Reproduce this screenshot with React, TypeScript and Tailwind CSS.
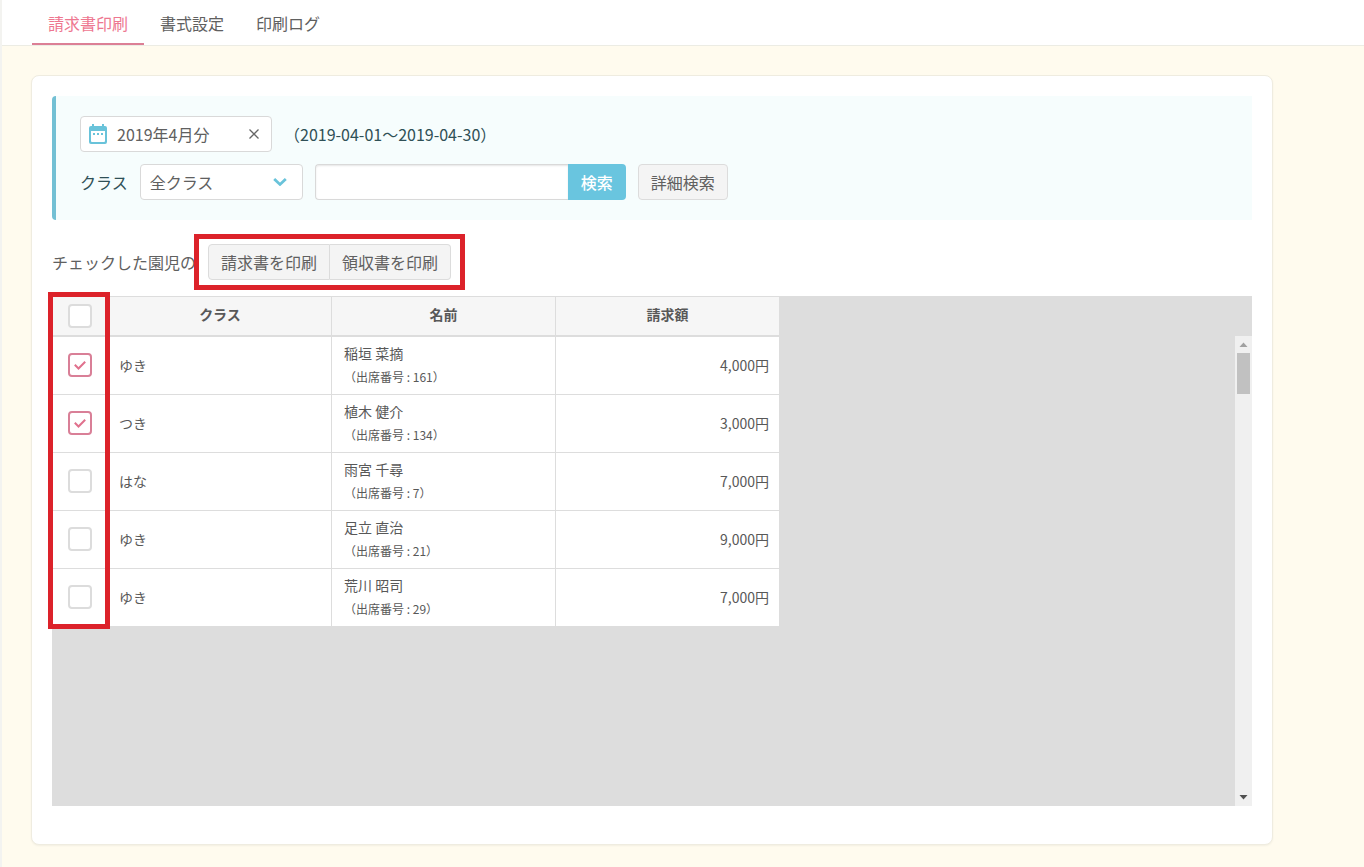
import { useState } from 'react';

interface Child {
    readonly id: number;
    readonly className: string;
    readonly name: string;
    readonly number: number;
    readonly amount: number;
}

const TABS = ['請求書印刷', '書式設定', '印刷ログ'];

const CHILDREN: Child[] = [
    { id: 1, className: 'ゆき', name: '稲垣 菜摘', number: 161, amount: 4000 },
    { id: 2, className: 'つき', name: '植木 健介', number: 134, amount: 3000 },
    { id: 3, className: 'はな', name: '雨宮 千尋', number: 7, amount: 7000 },
    { id: 4, className: 'ゆき', name: '足立 直治', number: 21, amount: 9000 },
    { id: 5, className: 'ゆき', name: '荒川 昭司', number: 29, amount: 7000 },
];

interface CheckboxProps {
    readonly label: string;
    readonly checked: boolean;
    readonly onChange: () => void;
}

function Checkbox({ label, checked, onChange }: CheckboxProps) {
    return (
        <label className="relative mx-auto block size-6">
            <input
                type="checkbox"
                aria-label={label}
                checked={checked}
                onChange={onChange}
                className="block size-6 appearance-none rounded border-2 border-[#dcdcdc] bg-white checked:border-[#d97f97]"
            />
            {checked && (
                <svg className="pointer-events-none absolute inset-0 size-6" viewBox="0 0 24 24" fill="none" stroke="#e0718d" strokeWidth={2}>
                    <path d="M6.8 11.8l3.7 3.7 6.7-6.7" />
                </svg>
            )}
        </label>
    );
}

function CalendarIcon() {
    return (
        <svg className="h-5 w-[18px] shrink-0" viewBox="0 0 18 20" fill="#69c3da">
            <path fillRule="evenodd" d="M3 0h2v2h8V0h2v2h1a2 2 0 012 2v14a2 2 0 01-2 2H2a2 2 0 01-2-2V4a2 2 0 012-2h1zM2 7v10a1 1 0 001 1h12a1 1 0 001-1V7z" />
            <path d="M4 9h2v2H4zM8 9h2v2H8zM12 9h2v2h-2z" />
        </svg>
    );
}

function FilterPanel() {
    const [month, setMonth] = useState('2019年4月分');

    return (
        <form
            className="flex flex-col gap-3 rounded-l-sm border-l-4 border-[#73c0d4] bg-[#f6fdfd] py-5 pl-6 text-[#2f5056]"
            onSubmit={(e) => e.preventDefault()}
        >
            <div className="flex items-center gap-3">
                <div className="flex h-9 w-48 items-center rounded border border-[#d9d9d9] bg-white px-2">
                    <CalendarIcon />
                    <input
                        type="text"
                        aria-label="対象月"
                        value={month}
                        onChange={(e) => setMonth(e.target.value)}
                        className="ml-2.5 h-8 min-w-0 flex-1 text-[#606060] outline-none"
                    />
                    <button type="button" aria-label="クリア" onClick={() => setMonth('')} className="px-[3px]">
                        <svg className="size-3" viewBox="0 0 12 12" fill="none" stroke="#666" strokeWidth={1.3}>
                            <path d="M1.5 1.5l9 9M10.5 1.5l-9 9" />
                        </svg>
                    </button>
                </div>
                <span>（2019-04-01～2019-04-30）</span>
            </div>
            <div className="flex items-center gap-3">
                <label htmlFor="class-select">クラス</label>
                <div className="relative">
                    <select
                        id="class-select"
                        className="block h-9 w-[163px] appearance-none rounded border border-[#d9d9d9] bg-white px-[9px] text-[#606060]"
                    >
                        <option>全クラス</option>
                        <option>ゆき</option>
                        <option>つき</option>
                        <option>はな</option>
                    </select>
                    <svg className="pointer-events-none absolute top-3.5 right-4 h-2 w-3.5" viewBox="0 0 14 8" fill="none" stroke="#69c3da" strokeWidth={2.8}>
                        <path d="M1.2 1L7 6.4 12.8 1" />
                    </svg>
                </div>
                <div className="flex">
                    <input
                        type="search"
                        aria-label="キーワード"
                        className="h-9 w-[253px] rounded-l border border-r-0 border-[#d9d9d9] bg-white px-3 shadow-[inset_0_1px_2px_rgba(0,0,0,0.1)] outline-none"
                    />
                    <button type="submit" className="h-9 w-[58px] rounded-r bg-[#69c5df] font-medium text-white">
                        検索
                    </button>
                </div>
                <button type="button" className="h-9 rounded border border-[#dcdcdc] bg-[#f4f4f4] px-3 text-[#606060]">
                    詳細検索
                </button>
            </div>
        </form>
    );
}

function ChildTable() {
    const [checkedIds, setCheckedIds] = useState<number[]>([1, 2]);
    const allChecked = checkedIds.length === CHILDREN.length;

    const toggle = (id: number) => {
        setCheckedIds((ids) => (ids.includes(id) ? ids.filter((i) => i !== id) : [...ids, id]));
    };

    return (
        <div className="relative flex h-[510px] items-start justify-between bg-[#ddd]">
            <table className="w-[728px] table-fixed border-separate border-spacing-0 text-sm text-[#585858]">
                <colgroup>
                    <col className="w-[57px]" />
                    <col className="w-[223px]" />
                    <col className="w-56" />
                    <col />
                </colgroup>
                <thead>
                    <tr className="h-[41px] bg-[#f6f6f6] *:border-t *:border-r *:border-b-2 *:border-[#ddd] *:px-0">
                        <th scope="col" className="py-0">
                            <Checkbox
                                label="すべて選択"
                                checked={allChecked}
                                onChange={() => setCheckedIds(allChecked ? [] : CHILDREN.map((c) => c.id))}
                            />
                        </th>
                        <th scope="col" className="pt-0 pb-1">クラス</th>
                        <th scope="col" className="pt-0 pb-1">名前</th>
                        <th scope="col" className="pt-0 pb-1">請求額</th>
                    </tr>
                </thead>
                <tbody>
                    {CHILDREN.map((child) => (
                        <tr
                            key={child.id}
                            className="h-[58px] bg-white *:border-r *:border-b *:border-[#ddd] *:pt-0 *:pb-0.5"
                        >
                            <td className="px-0">
                                <Checkbox
                                    label={child.name}
                                    checked={checkedIds.includes(child.id)}
                                    onChange={() => toggle(child.id)}
                                />
                            </td>
                            <td className="px-2.5">{child.className}</td>
                            <td className="px-3">
                                <div className="leading-6">{child.name}</div>
                                <div className="text-xs leading-6">（出席番号 : {child.number}）</div>
                            </td>
                            <td className="px-2.5 text-right">{child.amount.toLocaleString('en-US')}円</td>
                        </tr>
                    ))}
                </tbody>
            </table>

            <div aria-hidden="true" className="mt-10 flex w-[17px] flex-col items-center self-stretch bg-[#f0f0f0]">
                <svg className="h-[17px] w-[17px]" viewBox="0 0 17 17" fill="#a0a0a0">
                    <path d="M8.5 6.5L12.5 11h-8z" />
                </svg>
                <div className="h-[41px] w-[13px] bg-[#c1c1c1]" />
                <svg className="mt-auto h-[17px] w-[17px]" viewBox="0 0 17 17" fill="#505050">
                    <path d="M8.5 10.5L4.5 6h8z" />
                </svg>
            </div>

            {/* highlight around the checkbox column */}
            <div className="pointer-events-none absolute -top-1 -left-1 h-[337px] w-[62px] border-5 border-[#dc222a]" />
        </div>
    );
}

function App() {
    const [activeTab, setActiveTab] = useState(TABS[0]);

    return (
        <div className="min-h-screen border-l-2 border-[#f3f3f0] bg-[#fffbee] pb-6 font-['Noto_Sans_CJK_JP',sans-serif] text-base text-[#606060]">
            <nav className="flex h-[46px] border-b border-[#ececE4] bg-white pl-[30px]">
                {TABS.map((tab) => (
                    <button
                        key={tab}
                        type="button"
                        onClick={() => setActiveTab(tab)}
                        className={`h-[45px] border-b-2 px-4 pt-0.5 ${tab === activeTab
                            ? 'border-[#dc7f95] text-[#ee7790]'
                            : 'border-transparent text-[#606060]'
                        }`}
                    >
                        {tab}
                    </button>
                ))}
            </nav>

            <main className="mt-[29px] mr-[91px] ml-[29px] rounded-lg border border-[#efece0] bg-white px-5 pt-5 pb-[38px] shadow-xs">
                <FilterPanel />

                <div className="mt-6 mb-4 flex items-center gap-3">
                    <span>チェックした園児の</span>
                    <div className="relative flex">
                        <button type="button" className="h-9 rounded-l border border-[#dcdcdc] bg-[#f4f4f4] px-3">
                            請求書を印刷
                        </button>
                        <button type="button" className="h-9 rounded-r border border-l-0 border-[#dcdcdc] bg-[#f4f4f4] px-3">
                            領収書を印刷
                        </button>
                        {/* highlight around the print buttons */}
                        <div className="pointer-events-none absolute -inset-x-3.5 -inset-y-2.5 border-5 border-[#dc222a]" />
                    </div>
                </div>

                <ChildTable />
            </main>
        </div>
    );
}

export default App;
